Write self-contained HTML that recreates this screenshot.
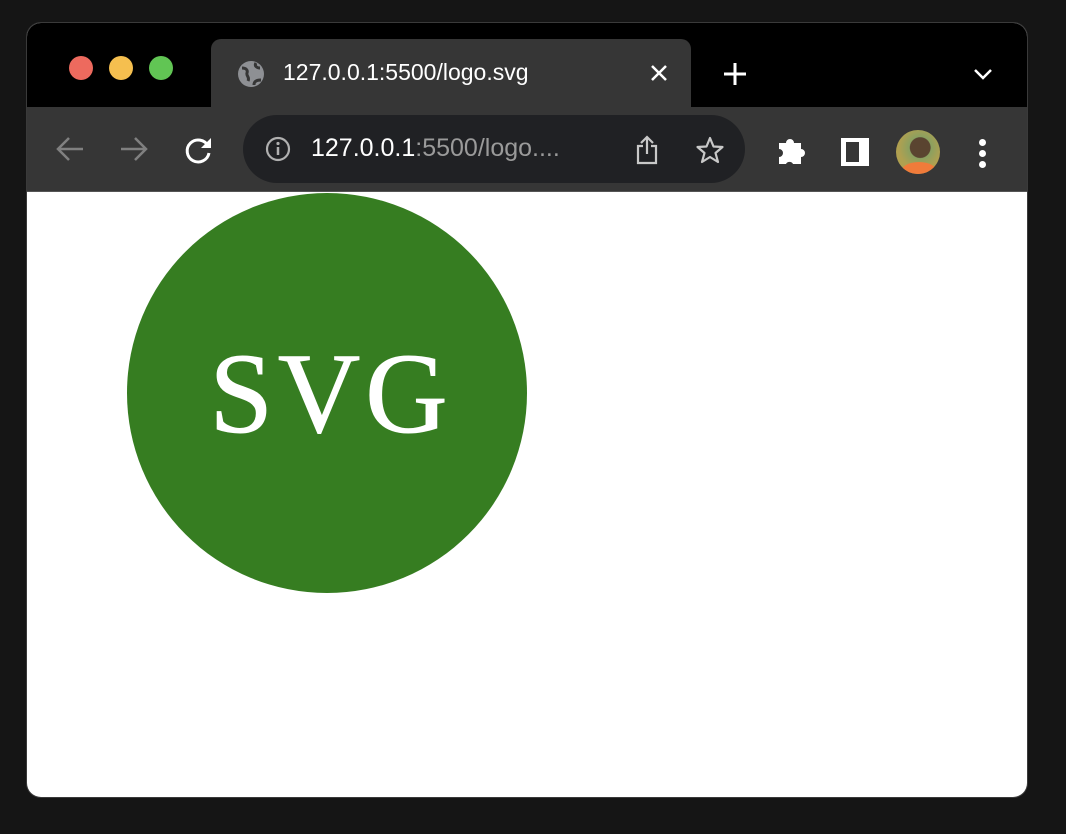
<!DOCTYPE html>
<html><head><style>
body{margin:0;width:1066px;height:834px;background:#151515;position:relative;overflow:hidden;font-family:"Liberation Sans",sans-serif}
.win{position:absolute;left:27px;top:23px;width:1000px;height:774px;border-radius:14px;overflow:hidden;background:#fff;box-shadow:0 0 0 1px #3a3a3a}
.tabbar{position:absolute;left:0;top:0;width:1000px;height:84px;background:#000}
.tool{position:absolute;left:0;top:84px;width:1000px;height:84px;background:#363636;border-bottom:1px solid #555}
.dot{position:absolute;top:33px;width:24px;height:24px;border-radius:50%}
.tab{position:absolute;left:184px;top:16px;width:480px;height:70px;background:#363636;border-radius:10px 10px 0 0}
.omni{position:absolute;left:216px;top:8px;width:502px;height:68px;background:#202124;border-radius:34px}
.t{position:absolute;color:#fff;font-size:23px}
</style></head><body>
<div class="win">
<div class="tabbar">
<div class="dot" style="left:42px;background:#ed6a5e"></div>
<div class="dot" style="left:82px;background:#f5bf4f"></div>
<div class="dot" style="left:122px;background:#61c554"></div>
<div class="tab">
<svg style="position:absolute;left:25px;top:20px" width="30" height="30" viewBox="0 0 30 30"><circle cx="15" cy="15" r="13" fill="#8e9094"/><path d="M6 9c4 0 6 2 5 5s3 4 1 8M20 4c-2 3 1 5 4 5M18 26c0-4 3-5 7-5" stroke="#363636" stroke-width="3" fill="none"/></svg>
<div class="t" style="left:72px;top:20px">127.0.0.1:5500/logo.svg</div>
<svg style="position:absolute;left:439px;top:25px" width="18" height="18"><path d="M2 2L16 16M16 2L2 16" stroke="#fff" stroke-width="2.5"/></svg>
</div>
<svg style="position:absolute;left:695px;top:38px" width="26" height="26"><path d="M13 2V24M2 13H24" stroke="#fff" stroke-width="3"/></svg>
<svg style="position:absolute;left:946px;top:44px" width="20" height="14"><path d="M2 3L10 11L18 3" stroke="#fff" stroke-width="2.5" fill="none"/></svg>
</div>
<div class="tool">
<svg style="position:absolute;left:28px;top:29px" width="30" height="26"><path d="M28 13H4M14 2L3 13L14 24" stroke="#808080" stroke-width="2.5" fill="none"/></svg>
<svg style="position:absolute;left:92px;top:29px" width="30" height="26"><path d="M2 13H26M16 2L27 13L16 24" stroke="#808080" stroke-width="2.5" fill="none"/></svg>
<svg style="position:absolute;left:157px;top:28px" width="30" height="30"><path d="M24 11A11 11 0 1 0 25 18" stroke="#fff" stroke-width="3" fill="none"/><path d="M27 3V13H17Z" fill="#fff"/></svg>
<div class="omni">
<svg style="position:absolute;left:22px;top:21px" width="26" height="26"><circle cx="13" cy="13" r="11" stroke="#b0b0b0" stroke-width="2.2" fill="none"/><path d="M13 11V19" stroke="#b0b0b0" stroke-width="2.5"/><circle cx="13" cy="7.5" r="1.6" fill="#b0b0b0"/></svg>
<div class="t" style="left:68px;top:19px;font-size:25px">127.0.0.1<span style="color:#9a9a9a">:5500/logo....</span></div>
<svg style="position:absolute;left:392px;top:20px" width="24" height="30"><path d="M8 11H3V28H21V11H16M12 19V3M6 8L12 2L18 8" stroke="#c8c8c8" stroke-width="2.2" fill="none"/></svg>
<svg style="position:absolute;left:452px;top:20px" width="30" height="30"><path d="M15 3L18.5 11.5L27.5 12L20.5 18L23 27L15 22L7 27L9.5 18L2.5 12L11.5 11.5Z" stroke="#c8c8c8" stroke-width="2.2" fill="none" stroke-linejoin="round"/></svg>
</div>
<svg style="position:absolute;left:749px;top:28px" width="32" height="30"><path d="M3 8H10A4 4 0 0 1 18 8H25V14A4 4 0 0 1 25 22V29H17A4 4 0 0 0 10 29H3V22A4 4 0 0 0 3 14Z" fill="#fff"/></svg>
<div style="position:absolute;left:814px;top:31px;width:28px;height:28px;background:#fff"><div style="position:absolute;left:5px;top:4px;width:13px;height:20px;background:#363636"></div></div>
<div style="position:absolute;left:869px;top:23px;width:44px;height:44px;border-radius:50%;background:radial-gradient(circle at 55% 40%,#5a4430 0 28%,#8aa060 30%,#b0a050 60%);overflow:hidden"><div style="position:absolute;left:5px;top:32px;width:36px;height:20px;border-radius:50% 50% 0 0;background:#f07b3a"></div></div>
<div style="position:absolute;left:952px;top:32px;width:7px;height:7px;border-radius:50%;background:#fff"></div>
<div style="position:absolute;left:952px;top:43px;width:7px;height:7px;border-radius:50%;background:#fff"></div>
<div style="position:absolute;left:952px;top:54px;width:7px;height:7px;border-radius:50%;background:#fff"></div>
</div>
<div style="position:absolute;left:100px;top:170px;width:400px;height:400px;border-radius:50%;background:#367d21"></div>
<div style="position:absolute;left:104px;top:306px;width:400px;text-align:center;font-family:'Liberation Serif',serif;font-size:114px;line-height:130px;color:#fff;letter-spacing:5px;-webkit-text-stroke:1px #fff">SVG</div>
</div>
</body></html>
